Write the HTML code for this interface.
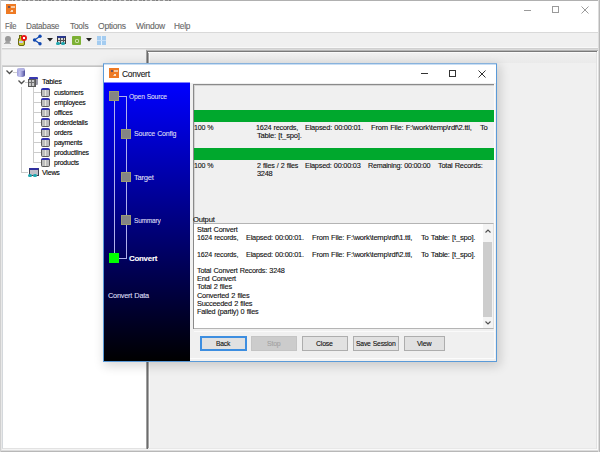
<!DOCTYPE html>
<html><head><meta charset="utf-8">
<style>
*{margin:0;padding:0;box-sizing:border-box}
html,body{width:600px;height:452px;overflow:hidden;background:#fff}
body{position:relative;font-family:"Liberation Sans",sans-serif;color:#000}
.a{position:absolute}
.tx{position:absolute;white-space:pre;transform-origin:0 0;-webkit-text-stroke:0.12px currentColor}
.btn{position:absolute;top:336px;height:15px;border:1px solid #adadad;background:#e1e1e1}
.sq{position:absolute;width:10px;height:10px;background:#858585;border:1px solid #9c9c70}
.ln{position:absolute;background:#b0b0ec}
.ti{position:absolute;width:9px;height:9px;border-radius:2px;background:#5c5c5c;border-top:2px solid #3030b0}
.ti i{position:absolute;left:1px;top:0px;width:7px;height:6px;background:linear-gradient(90deg,#bdbdbd 0 3px,#e6e6dc 3px 4px,#bdbdbd 4px 7px)}
</style></head><body>
<!-- outer window border -->
<div class="a" style="left:0;top:0;width:600px;height:1px;background:#b0b0b0"></div>
<div class="a" style="left:0;top:0;width:1px;height:452px;background:#c4c4c4"></div>
<div class="a" style="left:598px;top:0;width:2px;height:452px;background:#b4b4b4"></div>
<div class="a" style="left:9px;top:0;width:164px;height:1px;background:repeating-linear-gradient(90deg,#8a8a8a 0 3px,#b8b8b8 3px 4px,#7a7a7a 4px 6px,#c0c0c0 6px 8px,#909090 8px 11px,#d0d0d0 11px 13px)"></div>
<!-- app icon -->
<div class="a" style="left:6px;top:4px;width:10px;height:10px;background:#ee7a24"></div>
<div class="a" style="left:8px;top:6px;width:2px;height:2px;background:#404870;border-radius:1px"></div>
<div class="a" style="left:11px;top:6px;width:4px;height:2px;background:#f6c8a0"></div>
<div class="a" style="left:11px;top:10px;width:2px;height:2px;background:#f8e0c8"></div>
<div class="a" style="left:10px;top:11px;width:1px;height:1px;background:#f4b080"></div>
<!-- title controls -->
<div class="a" style="left:524px;top:10px;width:7px;height:1px;background:#9a9a9a"></div>
<div class="a" style="left:552px;top:6px;width:7px;height:7px;border:1px solid #9a9a9a"></div>
<svg class="a" style="left:581px;top:6px" width="8" height="8"><path d="M0.5 0.5L7.5 7.5M7.5 0.5L0.5 7.5" stroke="#9a9a9a" stroke-width="1"/></svg>
<div class="a" style="left:1px;top:32px;width:597px;height:1px;background:#d9d9d9"></div>
<!-- toolbar -->
<div class="a" style="left:1px;top:33px;width:597px;height:15px;background:#f0f0f0"></div>
<div class="a" style="left:1px;top:47px;width:597px;height:1px;background:#f8f8f8"></div>
<div class="a" style="left:1px;top:48px;width:597px;height:1px;background:#d0d0d0"></div>
<!-- lower area bg -->
<div class="a" style="left:1px;top:49px;width:597px;height:403px;background:#f0f0f0"></div>
<div class="a" style="left:0px;top:450px;width:600px;height:1px;background:#dcdcdc"></div>
<div class="a" style="left:0px;top:451px;width:600px;height:1px;background:#b8b8b8"></div>
<div class="a" style="left:1px;top:449px;width:597px;height:1px;background:#f4f4f4"></div>

<!-- left tree panel -->
<div class="a" style="left:1px;top:49px;width:145px;height:1px;background:#e4e4e4"></div>
<div class="a" style="left:2px;top:65px;width:144px;height:1px;background:#d4d4d4"></div>
<div class="a" style="left:2px;top:66px;width:144px;height:383px;background:#fff;border-top:1px solid #c4c4c4;border-left:1px solid #d4d8dc;border-bottom:1px solid #e2e2e2"></div>
<!-- right MDI panel -->
<div class="a" style="left:146px;top:49px;width:452px;height:1px;background:#dadada"></div>
<div class="a" style="left:146px;top:50px;width:452px;height:1px;background:#b4b4b4"></div>
<div class="a" style="left:146px;top:51px;width:451px;height:1px;background:#7a7a7a"></div>
<div class="a" style="left:146px;top:50px;width:1px;height:399px;background:#a0a0a0"></div>
<div class="a" style="left:147px;top:51px;width:1px;height:398px;background:#6c6c6c"></div>
<div class="a" style="left:148px;top:52px;width:1px;height:396px;background:#a8a8a8"></div>
<div class="a" style="left:149px;top:52px;width:1px;height:396px;background:#fafafa"></div>
<div class="a" style="left:148px;top:52px;width:449px;height:1px;background:#fafafa"></div>
<div class="a" style="left:150px;top:53px;width:447px;height:10px;background:linear-gradient(#f0f0f0,#eaeaea)"></div>
<div class="a" style="left:148px;top:448px;width:449px;height:1px;background:#e8e8e8"></div>
<div class="a" style="left:149px;top:449px;width:449px;height:1px;background:#fafafa"></div>
<div class="a" style="left:596px;top:52px;width:1px;height:397px;background:#e2e2e2"></div>
<div class="a" style="left:597px;top:51px;width:1px;height:399px;background:#fafafa"></div>
<div class="a" style="left:598px;top:0px;width:1px;height:452px;background:#dcdcdc"></div>
<div class="a" style="left:599px;top:0px;width:1px;height:452px;background:#b8b8b8"></div>
<div class="a" style="left:0px;top:0px;width:1px;height:452px;background:#d0d0d0"></div>
<div class="a" style="left:1px;top:33px;width:1px;height:417px;background:#e8e8e8"></div>

<!-- dialog -->
<div class="a" style="left:103px;top:63px;width:394px;height:299px;background:#f0f0f0;border:1px solid #5a9ad8;box-shadow:2px 3px 10px 1px rgba(0,0,0,0.16)"></div>
<div class="a" style="left:104px;top:64px;width:392px;height:19px;background:#fff"></div>
<div class="a" style="left:103px;top:63px;width:394px;height:1px;background:#88b2dc"></div>
<div class="a" style="left:104px;top:64px;width:392px;height:1px;background:#c8def4"></div>
<div class="a" style="left:109px;top:68px;width:10px;height:10px;background:#ee7a24"></div>
<div class="a" style="left:111px;top:70px;width:2px;height:2px;background:#404870;border-radius:1px"></div>
<div class="a" style="left:114px;top:70px;width:4px;height:2px;background:#f6c8a0"></div>
<div class="a" style="left:114px;top:74px;width:2px;height:2px;background:#f8e0c8"></div>
<div class="a" style="left:113px;top:75px;width:1px;height:1px;background:#f4b080"></div>
<div class="a" style="left:421px;top:73px;width:7px;height:1px;background:#333"></div>
<div class="a" style="left:449px;top:70px;width:7px;height:7px;border:1px solid #333"></div>
<svg class="a" style="left:478px;top:70px" width="8" height="8"><path d="M0.5 0.5L7.5 7.5M7.5 0.5L0.5 7.5" stroke="#333" stroke-width="1"/></svg>

<!-- sidebar -->
<div class="a" style="left:104px;top:82px;width:86px;height:1px;background:#8080ff"></div>
<div class="a" style="left:104px;top:83px;width:86px;height:278px;background:linear-gradient(#0000ff,#000000)"></div>
<div class="ln" style="left:114px;top:101px;width:1px;height:152px"></div>
<div class="ln" style="left:119px;top:96px;width:8px;height:1px"></div>
<div class="ln" style="left:126px;top:96px;width:1px;height:163px"></div>
<div class="ln" style="left:119px;top:258px;width:8px;height:1px"></div>
<div class="sq" style="left:109px;top:91px"></div>
<div class="sq" style="left:121px;top:129px"></div>
<div class="sq" style="left:121px;top:172px"></div>
<div class="sq" style="left:121px;top:215px"></div>
<div class="sq" style="left:109px;top:253px;background:#00ff00;border:none"></div>

<!-- content top panel -->
<div class="a" style="left:193px;top:84px;width:301px;height:245px;border-top:1px solid #8a8a8a;border-left:1px solid #8a8a8a"></div>
<div class="a" style="left:194px;top:85px;width:300px;height:1px;background:#d4d4d4"></div>
<div class="a" style="left:194px;top:85px;width:1px;height:138px;background:#d4d4d4"></div>
<div class="a" style="left:194px;top:110px;width:300px;height:12px;background:#00a82d"></div>
<div class="a" style="left:194px;top:148px;width:300px;height:12px;background:#00a82d"></div>

<!-- output text area -->
<div class="a" style="left:194px;top:223px;width:300px;height:106px;background:#fff;border-top:1px solid #b4b4b4;border-bottom:1px solid #b4b4b4;border-right:1px solid #e0e0e0"></div>
<!-- scrollbar -->
<div class="a" style="left:483px;top:224px;width:10px;height:104px;background:#f4f4f4"></div>
<div class="a" style="left:483px;top:242px;width:9px;height:75px;background:#cdcdcd"></div>
<svg class="a" style="left:484px;top:228px" width="8" height="6"><path d="M1.5 4.5L4 2L6.5 4.5" stroke="#505050" stroke-width="1.1" fill="none"/></svg>
<svg class="a" style="left:484px;top:320px" width="8" height="6"><path d="M1.5 1.5L4 4L6.5 1.5" stroke="#505050" stroke-width="1.1" fill="none"/></svg>
<div class="a" style="left:194px;top:331px;width:301px;height:1px;background:#fafafa"></div>
<div class="a" style="left:494px;top:84px;width:1px;height:275px;background:#fcfcfc"></div>
<div class="a" style="left:190px;top:358px;width:305px;height:1px;background:#fcfcfc"></div>

<!-- buttons -->
<div class="btn" style="left:200px;width:47px;border:2px solid #3d8ee0"></div>
<div class="btn" style="left:251px;width:46px;background:#cccccc;border-color:#c4c4c4"></div>
<div class="btn" style="left:302px;width:46px"></div>
<div class="btn" style="left:353px;width:46px"></div>
<div class="btn" style="left:404px;width:41px"></div>

<!-- tree lines / chevrons -->
<svg class="a" style="left:0;top:66px" width="146" height="120">
 <g stroke="#505050" stroke-width="1.3" fill="none">
  <path d="M6.5 4.5L9.5 7.5L12.5 4.5"/>
  <path d="M18.5 14.5L21.5 17.5L24.5 14.5"/>
 </g>
 <g stroke="#cccccc" stroke-width="1" fill="none">
  <path d="M13 6.5H17"/>
  <path d="M25 16.5H28"/>
  <path d="M21.5 21V107M21.5 106.5H28"/>
  <path d="M33.5 21V97"/>
  <path d="M34 26.5H41M34 36.5H41M34 46.5H41M34 56.5H41M34 66.5H41M34 76.5H41M34 86.5H41M34 96.5H41"/>
 </g>
</svg>
<!-- db icon -->
<div class="a" style="left:17px;top:68px;width:8px;height:9px;background:linear-gradient(90deg,#a0a0dc,#c4c4ee 35%,#8888c8 70%,#4c4c98);border-radius:4px/2px"></div>
<div class="a" style="left:17px;top:68px;width:8px;height:3px;background:#b4b4e4;border-radius:50%"></div>
<!-- Tables icon -->
<div class="a" style="left:29px;top:77px;width:9px;height:8px;background:#9a9aa8;border-top:2px solid #3838b0;border-radius:1px"></div>
<div class="a" style="left:28px;top:79px;width:8px;height:8px;background:linear-gradient(90deg,#c8c8c8 0 2px,#707070 2px 3px,#c8c8c8 3px 5px,#707070 5px 6px,#c8c8c8 6px);border:1px solid #585858"></div>
<div class="a" style="left:29px;top:82px;width:6px;height:1px;background:#707070"></div>
<!-- table icons -->
<div class="ti" style="left:41px;top:88px"><i></i></div>
<div class="ti" style="left:41px;top:98px"><i></i></div>
<div class="ti" style="left:41px;top:108px"><i></i></div>
<div class="ti" style="left:41px;top:118px"><i></i></div>
<div class="ti" style="left:41px;top:128px"><i></i></div>
<div class="ti" style="left:41px;top:138px"><i></i></div>
<div class="ti" style="left:41px;top:148px"><i></i></div>
<div class="ti" style="left:41px;top:158px"><i></i></div>
<!-- views icon -->
<div class="a" style="left:29px;top:168px;width:10px;height:8px;background:#c0c0c8;border:1px solid #404050;border-top:2px solid #3030a0"></div>
<div class="a" style="left:28px;top:174px;width:4px;height:3px;background:#20a8b0;border-radius:2px"></div>
<div class="a" style="left:33px;top:174px;width:4px;height:3px;background:#20a8b0;border-radius:2px"></div>

<!-- toolbar icons -->
<div class="a" style="left:4.5px;top:35.5px;width:6px;height:6.5px;background:#989898;border-radius:50%"></div>
<div class="a" style="left:5px;top:41px;width:5px;height:3px;background:#a0a0a0;border-radius:2px 2px 0 0"></div>
<div class="a" style="left:4px;top:43px;width:7px;height:1px;background:#b0b0b0"></div>
<div class="a" style="left:18px;top:38px;width:7px;height:8px;background:#c8c830;border:1px solid #6a6a10;border-radius:1px 1px 2px 2px"></div>
<div class="a" style="left:19px;top:35px;width:3px;height:4px;background:#c8c830;border:1px solid #6a6a10;border-bottom:none"></div>
<div class="a" style="left:19px;top:41px;width:4px;height:2px;background:#c8c8f0"></div>
<div class="a" style="left:21px;top:35px;width:6px;height:6px;background:#e81818;border-radius:50%"></div>
<div class="a" style="left:23px;top:37px;width:2px;height:2px;background:#fff"></div>
<svg class="a" style="left:32px;top:34px" width="11" height="12"><path d="M2.5 6L8 2.3M2.5 6L8 9.7" stroke="#1048b0" stroke-width="1.2"/><circle cx="2.5" cy="6" r="1.7" fill="#1048b0"/><circle cx="8" cy="2.3" r="1.7" fill="#1048b0"/><circle cx="8" cy="9.7" r="1.7" fill="#1048b0"/></svg>
<svg class="a" style="left:47px;top:38px" width="6" height="4"><path d="M0 0H6L3 3.5Z" fill="#222"/></svg>
<div class="a" style="left:57px;top:36px;width:9px;height:8px;background:linear-gradient(90deg,#d8d8d8 0 2px,#505050 2px 3px,#d8d8d8 3px 5px,#505050 5px 6px,#d8d8d8 6px);border:1px solid #383838;border-top:2px solid #283890"></div>
<div class="a" style="left:58px;top:40px;width:7px;height:1px;background:#505050"></div>
<div class="a" style="left:56px;top:42px;width:4px;height:3px;background:#20a8b0;border-radius:2px"></div>
<div class="a" style="left:61px;top:42px;width:4px;height:3px;background:#20a8b0;border-radius:2px"></div>
<div class="a" style="left:72px;top:36px;width:9px;height:9px;background:#7cb034;border-radius:1px"></div>
<div class="a" style="left:75px;top:39px;width:4px;height:4px;border:1px solid #c8e0a0;border-radius:1px"></div>
<svg class="a" style="left:86px;top:38px" width="6" height="4"><path d="M0 0H6L3 3.5Z" fill="#222"/></svg>
<div class="a" style="left:97px;top:36px;width:9px;height:9px;background:#a4ccf0"></div>
<div class="a" style="left:101px;top:36px;width:1px;height:9px;background:#e4f2ff"></div>
<div class="a" style="left:97px;top:40px;width:9px;height:1px;background:#c8e0f8"></div>

<div class="tx" style="left:5.30px;top:22px;font-size:9px;line-height:9px;color:#686868;letter-spacing:-0.25px;word-spacing:0.5px;transform:scale(0.8357,1.0)">File</div>
<div class="tx" style="left:26.10px;top:22px;font-size:9px;line-height:9px;color:#686868;letter-spacing:-0.25px;word-spacing:0.5px;transform:scale(0.9081,1.0)">Database</div>
<div class="tx" style="left:69.70px;top:22px;font-size:9px;line-height:9px;color:#686868;letter-spacing:-0.25px;word-spacing:0.5px;transform:scale(0.9300,1.0)">Tools</div>
<div class="tx" style="left:98.30px;top:22px;font-size:9px;line-height:9px;color:#686868;letter-spacing:-0.25px;word-spacing:0.5px;transform:scale(0.9467,1.0)">Options</div>
<div class="tx" style="left:135.90px;top:22px;font-size:9px;line-height:9px;color:#686868;letter-spacing:-0.25px;word-spacing:0.5px;transform:scale(0.9452,1.0)">Window</div>
<div class="tx" style="left:174.40px;top:22px;font-size:9px;line-height:9px;color:#686868;letter-spacing:-0.25px;word-spacing:0.5px;transform:scale(0.9222,1.0)">Help</div>
<div class="tx" style="left:122.00px;top:70px;font-size:9px;line-height:9px;color:#1a1a1a;letter-spacing:-0.25px;word-spacing:0.5px;transform:scale(0.9333,1.0)">Convert</div>
<div class="tx" style="left:41.70px;top:78px;font-size:8px;line-height:8px;color:#000000;letter-spacing:-0.25px;word-spacing:0.5px;transform:scale(0.9091,1.0)">Tables</div>
<div class="tx" style="left:53.80px;top:89px;font-size:8px;line-height:8px;color:#000000;letter-spacing:-0.25px;word-spacing:0.5px;transform:scale(0.8486,1.0)">customers</div>
<div class="tx" style="left:53.80px;top:99px;font-size:8px;line-height:8px;color:#000000;letter-spacing:-0.25px;word-spacing:0.5px;transform:scale(0.8668,1.0)">employees</div>
<div class="tx" style="left:53.80px;top:109px;font-size:8px;line-height:8px;color:#000000;letter-spacing:-0.25px;word-spacing:0.5px;transform:scale(0.8668,1.0)">offices</div>
<div class="tx" style="left:53.80px;top:119px;font-size:8px;line-height:8px;color:#000000;letter-spacing:-0.25px;word-spacing:0.5px;transform:scale(0.8668,1.0)">orderdetails</div>
<div class="tx" style="left:53.80px;top:129px;font-size:8px;line-height:8px;color:#000000;letter-spacing:-0.25px;word-spacing:0.5px;transform:scale(0.8668,1.0)">orders</div>
<div class="tx" style="left:53.80px;top:139px;font-size:8px;line-height:8px;color:#000000;letter-spacing:-0.25px;word-spacing:0.5px;transform:scale(0.8668,1.0)">payments</div>
<div class="tx" style="left:53.80px;top:149px;font-size:8px;line-height:8px;color:#000000;letter-spacing:-0.25px;word-spacing:0.5px;transform:scale(0.8668,1.0)">productlines</div>
<div class="tx" style="left:53.80px;top:159px;font-size:8px;line-height:8px;color:#000000;letter-spacing:-0.25px;word-spacing:0.5px;transform:scale(0.8668,1.0)">products</div>
<div class="tx" style="left:41.60px;top:169px;font-size:8px;line-height:8px;color:#000000;letter-spacing:-0.25px;word-spacing:0.5px;transform:scale(0.8850,1.0)">Views</div>
<div class="tx" style="left:129.00px;top:93px;font-size:8px;line-height:8px;color:#dcdcf2;letter-spacing:-0.25px;word-spacing:0.5px;transform:scale(0.8444,1.0)">Open Source</div>
<div class="tx" style="left:133.70px;top:130px;font-size:8px;line-height:8px;color:#dcdcf2;letter-spacing:-0.25px;word-spacing:0.5px;transform:scale(0.8813,1.0)">Source Config</div>
<div class="tx" style="left:134.00px;top:174px;font-size:8px;line-height:8px;color:#dcdcf2;letter-spacing:-0.25px;word-spacing:0.5px;transform:scale(0.9524,1.0)">Target</div>
<div class="tx" style="left:134.00px;top:217px;font-size:8px;line-height:8px;color:#dcdcf2;letter-spacing:-0.25px;word-spacing:0.5px;transform:scale(0.8182,1.0)">Summary</div>
<div class="tx" style="left:128.80px;top:255px;font-size:8px;line-height:8px;color:#ffffff;letter-spacing:-0.25px;word-spacing:0.5px;transform:scale(0.9862,1.0);font-weight:700">Convert</div>
<div class="tx" style="left:108.20px;top:292px;font-size:8px;line-height:8px;color:#dcdcf2;letter-spacing:-0.25px;word-spacing:0.5px;transform:scale(0.9178,1.0)">Convert Data</div>
<div class="tx" style="left:193.51px;top:124px;font-size:8px;line-height:8px;color:#111111;letter-spacing:-0.25px;word-spacing:0.5px;transform:scale(0.8857,1.0)">100 %</div>
<div class="tx" style="left:256.09px;top:124px;font-size:8px;line-height:8px;color:#111111;letter-spacing:-0.25px;word-spacing:0.5px;transform:scale(0.9111,1.0)">1624 records,</div>
<div class="tx" style="left:305.00px;top:124px;font-size:8px;line-height:8px;color:#111111;letter-spacing:-0.25px;word-spacing:0.5px;transform:scale(0.9254,1.0)">Elapsed: 00:00:01.</div>
<div class="tx" style="left:371.00px;top:124px;font-size:8px;line-height:8px;color:#111111;letter-spacing:-0.25px;word-spacing:0.5px;transform:scale(0.9500,1.0)">From File: F:\work\temp\rdf\2.ttl,</div>
<div class="tx" style="left:480.00px;top:124px;font-size:8px;line-height:8px;color:#111111;letter-spacing:-0.25px;word-spacing:0.5px;transform:scale(0.9625,1.0)">To</div>
<div class="tx" style="left:257.00px;top:132px;font-size:8px;line-height:8px;color:#111111;letter-spacing:-0.25px;word-spacing:0.5px;transform:scale(0.9565,1.0)">Table: [t_spo].</div>
<div class="tx" style="left:193.51px;top:162px;font-size:8px;line-height:8px;color:#111111;letter-spacing:-0.25px;word-spacing:0.5px;transform:scale(0.8857,1.0)">100 %</div>
<div class="tx" style="left:257.00px;top:162px;font-size:8px;line-height:8px;color:#111111;letter-spacing:-0.25px;word-spacing:0.5px;transform:scale(0.8913,1.0)">2 files / 2 files</div>
<div class="tx" style="left:305.00px;top:162px;font-size:8px;line-height:8px;color:#111111;letter-spacing:-0.25px;word-spacing:0.5px;transform:scale(0.9131,1.0)">Elapsed: 00:00:03</div>
<div class="tx" style="left:368.30px;top:162px;font-size:8px;line-height:8px;color:#111111;letter-spacing:-0.25px;word-spacing:0.5px;transform:scale(0.8957,1.0)">Remaining: 00:00:00</div>
<div class="tx" style="left:438.30px;top:162px;font-size:8px;line-height:8px;color:#111111;letter-spacing:-0.25px;word-spacing:0.5px;transform:scale(0.9250,1.0)">Total Records:</div>
<div class="tx" style="left:257.00px;top:170px;font-size:8px;line-height:8px;color:#111111;letter-spacing:-0.25px;word-spacing:0.5px;transform:scale(0.9224,1.0)">3248</div>
<div class="tx" style="left:193.00px;top:216px;font-size:8px;line-height:8px;color:#111111;letter-spacing:-0.25px;word-spacing:0.5px;transform:scale(0.9565,1.0)">Output</div>
<div class="tx" style="left:197.10px;top:226px;font-size:8px;line-height:8px;color:#111111;letter-spacing:-0.25px;word-spacing:0.5px;transform:scale(0.9156,1.0)">Start Convert</div>
<div class="tx" style="left:197.01px;top:234px;font-size:8px;line-height:8px;color:#111111;letter-spacing:-0.25px;word-spacing:0.5px;transform:scale(0.8911,1.0)">1624 records,</div>
<div class="tx" style="left:246.25px;top:234px;font-size:8px;line-height:8px;color:#111111;letter-spacing:-0.25px;word-spacing:0.5px;transform:scale(0.9206,1.0)">Elapsed: 00:00:01.</div>
<div class="tx" style="left:312.00px;top:234px;font-size:8px;line-height:8px;color:#111111;letter-spacing:-0.25px;word-spacing:0.5px;transform:scale(0.9462,1.0)">From File: F:\work\temp\rdf\1.ttl,</div>
<div class="tx" style="left:421.20px;top:234px;font-size:8px;line-height:8px;color:#111111;letter-spacing:-0.25px;word-spacing:0.5px;transform:scale(0.9544,1.0)">To Table: [t_spo].</div>
<div class="tx" style="left:197.01px;top:251px;font-size:8px;line-height:8px;color:#111111;letter-spacing:-0.25px;word-spacing:0.5px;transform:scale(0.8911,1.0)">1624 records,</div>
<div class="tx" style="left:246.25px;top:251px;font-size:8px;line-height:8px;color:#111111;letter-spacing:-0.25px;word-spacing:0.5px;transform:scale(0.9206,1.0)">Elapsed: 00:00:01.</div>
<div class="tx" style="left:312.00px;top:251px;font-size:8px;line-height:8px;color:#111111;letter-spacing:-0.25px;word-spacing:0.5px;transform:scale(0.9462,1.0)">From File: F:\work\temp\rdf\2.ttl,</div>
<div class="tx" style="left:421.20px;top:251px;font-size:8px;line-height:8px;color:#111111;letter-spacing:-0.25px;word-spacing:0.5px;transform:scale(0.9544,1.0)">To Table: [t_spo].</div>
<div class="tx" style="left:197.20px;top:267px;font-size:8px;line-height:8px;color:#111111;letter-spacing:-0.25px;word-spacing:0.5px;transform:scale(0.9115,1.0)">Total Convert Records: 3248</div>
<div class="tx" style="left:197.20px;top:275px;font-size:8px;line-height:8px;color:#111111;letter-spacing:-0.25px;word-spacing:0.5px;transform:scale(0.9224,1.0)">End Convert</div>
<div class="tx" style="left:197.20px;top:283px;font-size:8px;line-height:8px;color:#111111;letter-spacing:-0.25px;word-spacing:0.5px;transform:scale(0.9224,1.0)">Total 2 files</div>
<div class="tx" style="left:197.20px;top:292px;font-size:8px;line-height:8px;color:#111111;letter-spacing:-0.25px;word-spacing:0.5px;transform:scale(0.9224,1.0)">Converted 2 files</div>
<div class="tx" style="left:197.20px;top:300px;font-size:8px;line-height:8px;color:#111111;letter-spacing:-0.25px;word-spacing:0.5px;transform:scale(0.9224,1.0)">Succeeded 2 files</div>
<div class="tx" style="left:197.20px;top:308px;font-size:8px;line-height:8px;color:#111111;letter-spacing:-0.25px;word-spacing:0.5px;transform:scale(0.9059,1.0)">Failed (partly) 0 files</div>
<div class="tx" style="left:215.50px;top:340px;font-size:8px;line-height:8px;color:#111;letter-spacing:-0.25px;word-spacing:0.5px;transform:scale(0.8353,1.0)">Back</div>
<div class="tx" style="left:267.00px;top:340px;font-size:8px;line-height:8px;color:#a3a3a3;letter-spacing:-0.25px;word-spacing:0.5px;transform:scale(0.8750,1.0)">Stop</div>
<div class="tx" style="left:316.00px;top:340px;font-size:8px;line-height:8px;color:#111;letter-spacing:-0.25px;word-spacing:0.5px;transform:scale(0.8684,1.0)">Close</div>
<div class="tx" style="left:355.50px;top:340px;font-size:8px;line-height:8px;color:#111;letter-spacing:-0.25px;word-spacing:0.5px;transform:scale(0.8511,1.0)">Save Session</div>
<div class="tx" style="left:416.75px;top:340px;font-size:8px;line-height:8px;color:#111;letter-spacing:-0.25px;word-spacing:0.5px;transform:scale(0.8824,1.0)">View</div>
</body></html>
